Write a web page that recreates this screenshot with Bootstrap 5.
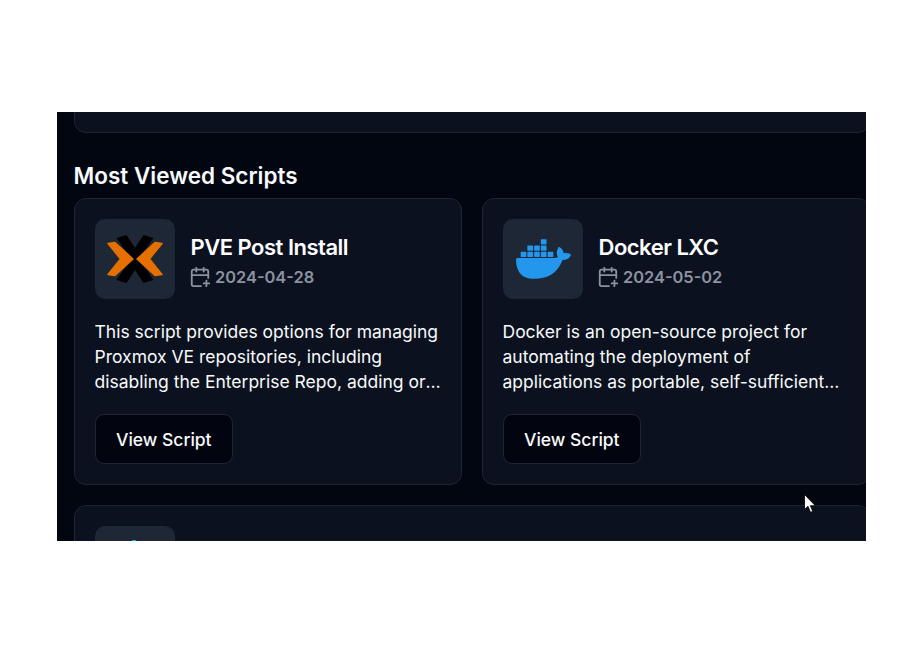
<!DOCTYPE html>
<html lang="en"><head><meta charset="utf-8"><title>Most Viewed Scripts</title>
<link href="https://cdn.jsdelivr.net/npm/bootstrap@5.3.0/dist/css/bootstrap.min.css" rel="stylesheet">
<style>
html,body{background:#fff;height:100%;overflow:hidden}
.stage{margin:112px 0 0 57px;width:809px;height:429px;overflow:hidden;background:#020611;padding-left:17px;font-family:Inter,"Liberation Sans",sans-serif;color:#f8fafc}
.inner{width:796px}
.sc-card{background:#0b111e;border:1px solid #1e2533;border-radius:12px}
.top-stub{height:41px;margin-top:-20px}
.sc-heading{font-size:22.5px;font-weight:600;line-height:32px;margin:27px 0 6px -.5px;color:#f8fafc}
.sc-grid{display:grid;grid-template-columns:388px 388px;gap:20px}
.sc-body{padding:20px}
.wide{grid-column:1 / 3;height:100px}
.tile{width:80px;height:80px;border-radius:10px;background:#1e2735;flex:none}
.sc-head{gap:14px}
.sc-meta{padding-top:6px}
.sc-title{font-size:22px;font-weight:600;line-height:30px;letter-spacing:-.5px;color:#fff;margin-left:1.500px}
.sc-date{font-size:16.400px;font-weight:600;line-height:30px;color:#8b92a0}
.sc-desc{font-size:17.500px;line-height:25px;margin:20px 0 20px -.5px;color:#f8fafc;display:-webkit-box;-webkit-line-clamp:3;-webkit-box-orient:vertical;overflow:hidden}
.sc-btn{font-size:17.500px;font-weight:500;line-height:24px;padding:13px 20px 11px;background:#02050f;color:#f8fafc;border:1px solid #1e2533;border-radius:9px}
.cursor{position:absolute;left:804px;top:494px}
</style></head><body>
<div class="stage"><div class="inner">
<div class="sc-card top-stub"></div>
<h2 class="sc-heading">Most Viewed Scripts</h2>
<div class="sc-grid">
<div class="sc-card sc-body">
<div class="d-flex align-items-center sc-head">
<div class="tile">
<svg class="d-block" width="80" height="80" viewBox="0 0 80 80"><path fill="#000" d="M21.500 19 31.500 16 40 29 48.500 16 58.500 19 44 40 58.500 61 48.500 64 40 51 31.500 64 21.500 61 36 40Z"/><path fill="#e57000" stroke="#e57000" stroke-width="1.500" stroke-linejoin="round" d="M13 24.500 20 23.500 38 40 20 56.500 13 55.500 25.500 40ZM67 24.500 60 23.500 42 40 60 56.500 67 55.500 54.500 40Z"/></svg>
</div>
<div class="sc-meta"><div class="sc-title">PVE Post Install</div>
<div class="sc-date d-flex align-items-center gap-1"><svg width="22" height="22" viewBox="0 0 24 24" fill="none" stroke="currentColor" stroke-width="2" stroke-linecap="round" stroke-linejoin="round"><path d="M8 2v4"/><path d="M16 2v4"/><path d="M21 13V6a2 2 0 0 0-2-2H5a2 2 0 0 0-2 2v14a2 2 0 0 0 2 2h8"/><path d="M3 10h18"/><path d="M16 19h6"/><path d="M19 16v6"/></svg>2024-04-28</div></div>
</div>
<p class="sc-desc">This script provides options for managing Proxmox VE repositories, including disabling the Enterprise Repo, adding or correcting PVE sources, and more post-install routines.</p>
<a class="btn sc-btn" href="#">View Script</a>
</div>
<div class="sc-card sc-body">
<div class="d-flex align-items-center sc-head">
<div class="tile d-flex align-items-center justify-content-center">
<svg width="55" height="56" viewBox="0 0 24 24"><path fill="#2396ed" d="M13.983 11.078h2.119a.186.186 0 00.186-.185V9.006a.186.186 0 00-.186-.186h-2.119a.185.185 0 00-.185.185v1.888c0 .102.083.185.185.185m-2.954-5.43h2.118a.186.186 0 00.186-.186V3.574a.186.186 0 00-.186-.185h-2.118a.185.185 0 00-.185.185v1.888c0 .102.082.185.185.186m0 2.716h2.118a.187.187 0 00.186-.186V6.29a.186.186 0 00-.186-.185h-2.118a.185.185 0 00-.185.185v1.887c0 .102.082.185.185.186m-2.93 0h2.12a.186.186 0 00.184-.186V6.29a.185.185 0 00-.185-.185H8.1a.185.185 0 00-.185.185v1.887c0 .102.083.185.185.186m-2.964 0h2.119a.186.186 0 00.185-.186V6.29a.185.185 0 00-.185-.185H5.136a.186.186 0 00-.186.185v1.887c0 .102.084.185.186.186m5.893 2.715h2.118a.186.186 0 00.186-.185V9.006a.186.186 0 00-.186-.186h-2.118a.185.185 0 00-.185.185v1.888c0 .102.082.185.185.185m-2.93 0h2.12a.185.185 0 00.184-.185V9.006a.185.185 0 00-.184-.186h-2.12a.185.185 0 00-.184.185v1.888c0 .102.083.185.185.185m-2.964 0h2.119a.185.185 0 00.185-.185V9.006a.185.185 0 00-.184-.186h-2.12a.186.186 0 00-.186.186v1.887c0 .102.084.185.186.185m-2.92 0h2.12a.185.185 0 00.184-.185V9.006a.185.185 0 00-.184-.186h-2.12a.185.185 0 00-.184.186v1.887c0 .102.082.185.185.185M23.763 9.89c-.065-.051-.672-.51-1.954-.51-.338.001-.676.03-1.01.087-.248-1.7-1.653-2.53-1.716-2.566l-.344-.199-.226.327c-.284.438-.49.922-.612 1.43-.23.97-.09 1.882.403 2.661-.595.332-1.55.413-1.744.42H.751a.751.751 0 00-.75.748 11.376 11.376 0 00.692 4.062c.545 1.428 1.355 2.48 2.41 3.124 1.18.723 3.1 1.137 5.275 1.137.983.003 1.963-.086 2.93-.266a12.248 12.248 0 003.823-1.389c.98-.567 1.86-1.288 2.61-2.136 1.252-1.418 1.998-2.997 2.553-4.4h.221c1.372 0 2.215-.549 2.68-1.009.309-.293.55-.65.707-1.046l.098-.288Z"/></svg>
</div>
<div class="sc-meta"><div class="sc-title">Docker LXC</div>
<div class="sc-date d-flex align-items-center gap-1"><svg width="22" height="22" viewBox="0 0 24 24" fill="none" stroke="currentColor" stroke-width="2" stroke-linecap="round" stroke-linejoin="round"><path d="M8 2v4"/><path d="M16 2v4"/><path d="M21 13V6a2 2 0 0 0-2-2H5a2 2 0 0 0-2 2v14a2 2 0 0 0 2 2h8"/><path d="M3 10h18"/><path d="M16 19h6"/><path d="M19 16v6"/></svg>2024-05-02</div></div>
</div>
<p class="sc-desc">Docker is an open-source project for automating the deployment of applications as portable, self-sufficient containers that can run on the cloud or on-premises.</p>
<a class="btn sc-btn" href="#">View Script</a>
</div>
<div class="sc-card sc-body wide">
<div class="tile d-flex justify-content-center"><svg width="56" height="56" viewBox="0 0 56 56"><path fill="#00b4e0" d="M25 14h4v30h-4z"/></svg></div>
</div>
</div>
</div></div>
<svg class="cursor" width="13" height="20" viewBox="0 0 13 20"><path fill="#fff" stroke="#000" stroke-width=".8" d="M.5.5v15l3.500-3.200 2.500 6 2.300-1-2.500-5.600h5z"/></svg>
</body></html>
